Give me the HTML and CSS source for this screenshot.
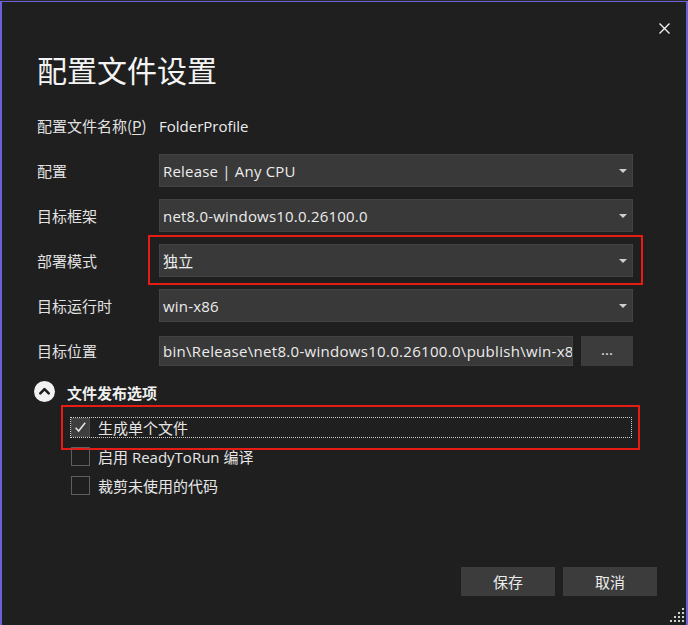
FILE: index.html
```html
<!DOCTYPE html>
<html lang="zh-CN">
<head>
<meta charset="utf-8">
<title>配置文件设置</title>
<link rel="stylesheet" href="styles.css">
</head>
<body>
<div class="topstrip"></div>
<div class="window">
  <div class="titlebar">
    <button class="close" aria-label="关闭">
      <svg width="11" height="11" viewBox="0 0 11 11"><path d="M0.5 0.5 L10.5 10.5 M10.5 0.5 L0.5 10.5" stroke="#f0f0f0" stroke-width="1.4" fill="none"/></svg>
    </button>
  </div>
  <h1 class="title">配置文件设置</h1>

  <div class="form">
    <div class="row">
      <div class="label">配置文件名称(<u>P</u>)</div>
      <div class="value">FolderProfile</div>
    </div>
    <div class="row">
      <div class="label">配置</div>
      <div class="select"><span class="sel-text">Release | Any CPU</span><span class="arrow"></span></div>
    </div>
    <div class="row">
      <div class="label">目标框架</div>
      <div class="select"><span class="sel-text">net8.0-windows10.0.26100.0</span><span class="arrow"></span></div>
    </div>
    <div class="row">
      <div class="label">部署模式</div>
      <div class="select highlighted"><span class="sel-text">独立</span><span class="arrow"></span><span class="redbox"></span></div>
    </div>
    <div class="row">
      <div class="label">目标运行时</div>
      <div class="select"><span class="sel-text">win-x86</span><span class="arrow"></span></div>
    </div>
    <div class="row">
      <div class="label">目标位置</div>
      <div class="pathrow">
        <div class="textbox"><span class="tb-text">bin\Release\net8.0-windows10.0.26100.0\publish\win-x86\</span></div>
        <button class="browse">...</button>
      </div>
    </div>
  </div>

  <div class="section">
    <span class="chev">
      <svg width="21" height="21" viewBox="0 0 21 21"><circle cx="10.5" cy="10.5" r="10.5" fill="#f2f2f2"/><path d="M6.3 12.4 L10.5 8.2 L14.7 12.4" stroke="#1f1f1f" stroke-width="2.6" fill="none" stroke-linecap="round" stroke-linejoin="round"/></svg>
    </span>
    <span class="section-title">文件发布选项</span>
  </div>

  <div class="options">
    <div class="opt focused">
      <span class="box checked">
        <svg width="17" height="17" viewBox="0 0 17 17"><path d="M3.6 8.8 L6.6 12 L13.2 3.8" stroke="#e6e6e6" stroke-width="1.5" fill="none"/></svg>
      </span>
      <span class="opt-text">生成单个文件</span>
      <span class="focusrect"></span>
      <span class="redbox2"></span>
    </div>
    <div class="opt">
      <span class="box"></span>
      <span class="opt-text">启用 ReadyToRun 编译</span>
    </div>
    <div class="opt">
      <span class="box"></span>
      <span class="opt-text">裁剪未使用的代码</span>
    </div>
  </div>

  <div class="spacer"></div>

  <div class="footer">
    <button class="btn">保存</button>
    <button class="btn">取消</button>
  </div>

  <svg class="grip" width="15" height="15" viewBox="0 0 15 15">
    <g fill="#d0d0d0">
      <rect x="12" y="0" width="2" height="2"/>
      <rect x="12" y="4" width="2" height="2"/><rect x="8" y="4" width="2" height="2"/>
      <rect x="12" y="8" width="2" height="2"/><rect x="8" y="8" width="2" height="2"/><rect x="4" y="8" width="2" height="2"/>
      <rect x="12" y="12" width="2" height="2"/><rect x="8" y="12" width="2" height="2"/><rect x="4" y="12" width="2" height="2"/><rect x="0" y="12" width="2" height="2"/>
    </g>
  </svg>
</div>
</body>
</html>
```

FILE: styles.css
```css
* { box-sizing: border-box; }
html, body {
  margin: 0;
  padding: 0;
  background: #1f1f1f;
  height: 625px;
  overflow: hidden;
}
body {
  font-family: "Segoe UI", "Open Sans", "Noto Sans CJK SC", sans-serif;
  font-size: 15px;
  color: #e6e6e6;
}
.topstrip {
  height: 1px;
  background: #2a2a2a;
}
.window {
  position: relative;
  height: 624px;
  border-top: 1px solid #6b60d8;
  border-left: 2px solid #6b60d8;
  border-right: 2px solid #6b60d8;
  background: #1f1f1f;
  padding: 0 0 0 35px;
  display: flex;
  flex-direction: column;
}
.titlebar {
  height: 18px;
  display: flex;
  justify-content: flex-end;
  padding-top: 19px;
  padding-right: 15px;
}
.close {
  background: none;
  border: 0;
  padding: 0;
  width: 14px;
  height: 14px;
  display: flex;
  align-items: center;
  justify-content: center;
  cursor: pointer;
}
.title {
  margin: 26px 0 0 0;
  font-family: "Noto Sans CJK SC", sans-serif;
  font-weight: 400;
  font-size: 30px;
  line-height: 44px;
  color: #f4f4f4;
  letter-spacing: 0;
}
.form {
  margin-top: 18px;
  display: flex;
  flex-direction: column;
  gap: 12px;
  width: 596px;
}
.row {
  display: flex;
  align-items: center;
  height: 33px;
}
.label {
  width: 122px;
  flex: none;
  font-family: "Noto Sans CJK SC", sans-serif;
  color: #e2e2e2;
}
.label u { text-decoration: underline; text-underline-offset: 2px; }
.value {
  color: #ececec;
}
.select {
  position: relative;
  flex: 1;
  height: 33px;
  background: #393939;
  border: 1px solid #434343;
  display: flex;
  align-items: center;
  padding-left: 3px;
  color: #ececec;
}
.sel-text {
  flex: 1;
  font-family: "Segoe UI", "Open Sans", "Noto Sans CJK SC", sans-serif;
  white-space: nowrap;
  letter-spacing: 0.2px;
}
.arrow {
  width: 0;
  height: 0;
  border-left: 4px solid transparent;
  border-right: 4px solid transparent;
  border-top: 4px solid #cfcfcf;
  margin-right: 5px;
}
.redbox {
  position: absolute;
  left: -12px;
  top: -10px;
  right: -11px;
  bottom: -9px;
  border: 2px solid #e81c14;
  pointer-events: none;
}
.pathrow {
  flex: 1;
  display: flex;
  gap: 8px;
  height: 30px;
}
.textbox {
  width: 414px;
  flex: none;
  height: 30px;
  background: #393939;
  border: 1px solid #434343;
  overflow: hidden;
  display: flex;
  align-items: center;
  padding-left: 3px;
  color: #ececec;
  white-space: nowrap;
  letter-spacing: 0.3px;
}
.browse {
  flex: 1;
  height: 30px;
  background: #3c3c3c;
  border: 0;
  color: #e6e6e6;
  font-family: "Segoe UI", "Open Sans", sans-serif;
  font-size: 15px;
  padding: 0 0 4px 0;
}
.section {
  margin-top: 12px;
  margin-left: -3px;
  display: flex;
  align-items: center;
  gap: 12px;
  height: 24px;
}
.chev { display: flex; }
.section-title {
  font-family: "Noto Sans CJK SC", sans-serif;
  font-weight: 700;
  color: #f0f0f0;
  padding-top: 3px;
}
.options {
  margin-top: 14px;
  margin-left: 34px;
  display: flex;
  flex-direction: column;
  gap: 8px;
}
.opt {
  position: relative;
  display: flex;
  align-items: center;
  gap: 8px;
  height: 21px;
  width: 561px;
}
.box {
  width: 19px;
  height: 19px;
  border: 1px solid #5e5e5e;
  display: flex;
  align-items: center;
  justify-content: center;
  flex: none;
}
.box.checked {
  background: #3e3e3e;
  border-color: #4a4a4a;
}
.opt-text {
  font-family: "Segoe UI", "Open Sans", "Noto Sans CJK SC", sans-serif;
  color: #e6e6e6;
  white-space: nowrap;
}
.focusrect {
  position: absolute;
  left: -1px;
  top: 0;
  right: 0;
  bottom: 0;
  border: 1px dotted #cfcfcf;
  pointer-events: none;
}
.redbox2 {
  position: absolute;
  left: -10px;
  top: -12px;
  right: -8px;
  bottom: -12px;
  border: 2px solid #e81c14;
  pointer-events: none;
}
.spacer { flex: 1; }
.footer {
  display: flex;
  justify-content: flex-end;
  gap: 8px;
  padding-right: 29px;
  margin-bottom: 29px;
}
.btn {
  width: 94px;
  height: 29px;
  background: #3c3c3c;
  border: 0;
  color: #ececec;
  font-family: "Noto Sans CJK SC", sans-serif;
  font-size: 15px;
  padding: 0;
}
.grip {
  position: absolute;
  right: 1px;
  bottom: 2px;
}
```
